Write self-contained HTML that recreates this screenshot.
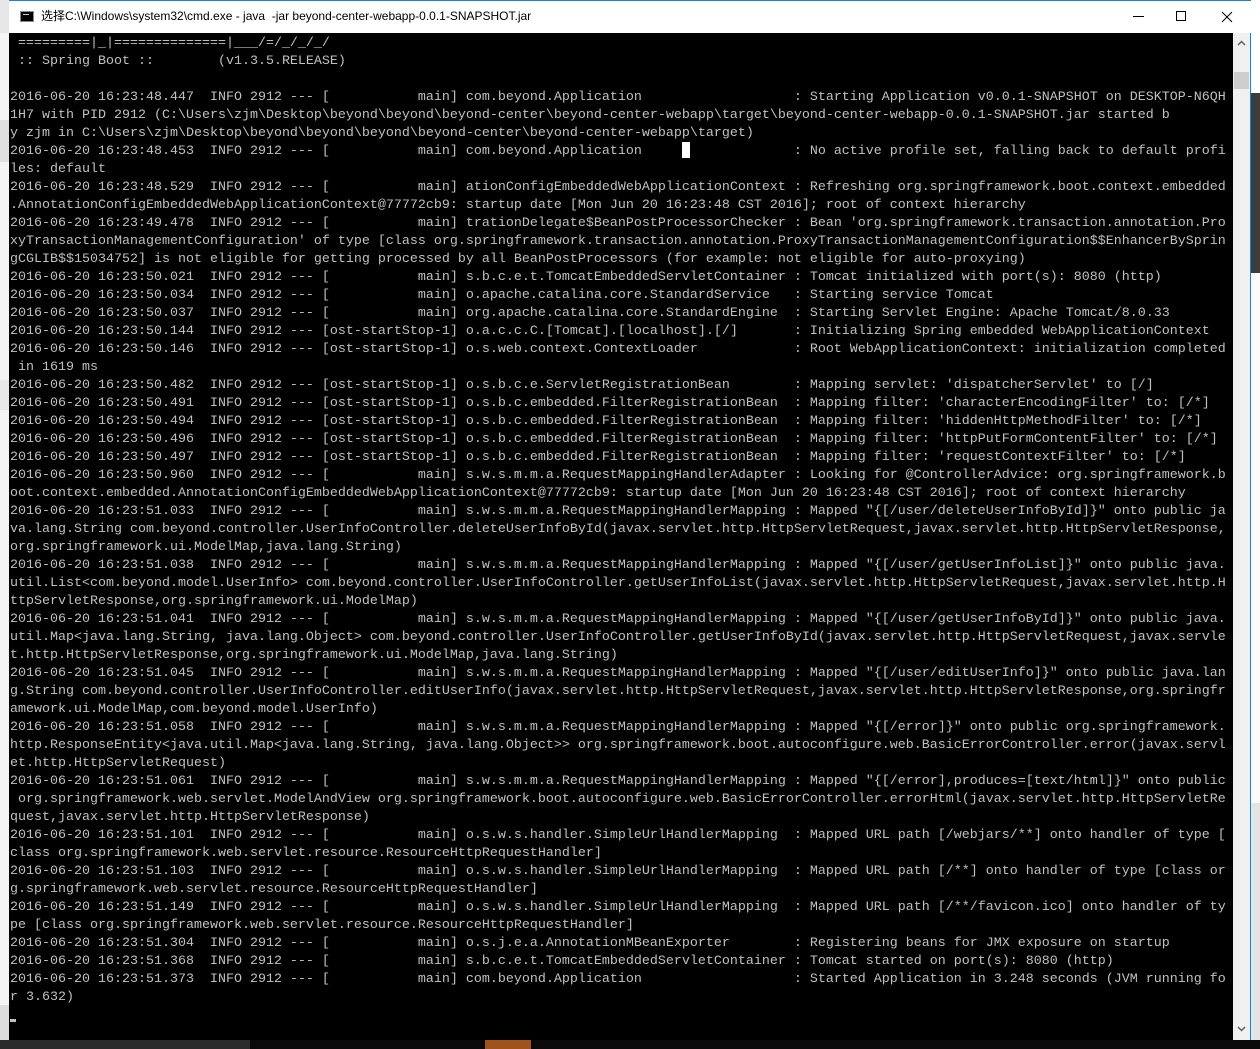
<!DOCTYPE html>
<html><head><meta charset="utf-8"><style>
*{margin:0;padding:0;box-sizing:border-box}
html,body{width:1260px;height:1049px;overflow:hidden;background:#fff;position:relative;font-family:"Liberation Sans","Noto Sans CJK SC",sans-serif}
.abs{position:absolute}
#title{left:9px;top:0;width:1242px;height:33px;background:#fff;border-top:1px solid #1883d7}
#term{left:9px;top:33px;width:1224px;height:1007px;background:#000}
pre{position:absolute;left:10px;top:35px;font-family:"Liberation Mono",monospace;font-size:13.333px;line-height:18px;color:#c0c0c0;white-space:pre}
#sb{left:1233px;top:33px;width:17px;height:1007px;background:#f0f0f0}
</style></head><body>
<div class="abs" style="left:0;top:0;width:9px;height:1040px;background:#f4f4f4"></div>
<div class="abs" style="left:0;top:0;width:9px;height:33px;background:#e6e6e6"></div>
<div class="abs" style="left:0;top:120px;width:9px;height:42px;background:#e0e0e0"></div>
<div class="abs" style="left:0;top:380px;width:9px;height:30px;background:#e8e8e8"></div>
<div class="abs" style="left:0;top:1005px;width:9px;height:35px;background:#dcdcdc"></div>
<div class="abs" style="left:1251px;top:0;width:9px;height:93px;background:#fff"></div>
<div class="abs" style="left:1251px;top:93px;width:9px;height:180px;background:#3c3c3c"></div>
<div class="abs" style="left:1251px;top:273px;width:9px;height:530px;background:#fafafa"></div>
<div class="abs" style="left:1251px;top:803px;width:9px;height:237px;background:#e4e4e4"></div>
<div class="abs" style="left:0;top:1040px;width:250px;height:9px;background:#2b2b2b"></div>
<div class="abs" style="left:250px;top:1040px;width:1010px;height:9px;background:#0a0a0a"></div>
<div class="abs" style="left:485px;top:1040px;width:46px;height:9px;background:#a0521d"></div>
<div class="abs" style="left:9px;top:0;width:1242px;height:1040px;border:1px solid #1883d7"></div>
<div id="title" class="abs">
 <div class="abs" style="left:11px;top:10px;width:14px;height:11px;background:#000;border:1px solid #888"><div style="position:absolute;left:2px;top:2px;width:6px;height:3px;border-top:1px solid #ccc"></div></div>
 <div class="abs" style="left:32px;top:7px;font-size:12px;color:#000;white-space:pre;line-height:16px">选择C:\Windows\system32\cmd.exe - java  -jar beyond-center-webapp-0.0.1-SNAPSHOT.jar</div>
 <div class="abs" style="left:1124px;top:15px;width:11px;height:1px;background:#000"></div>
 <div class="abs" style="left:1167px;top:10px;width:10px;height:10px;border:1px solid #000"></div>
 <svg class="abs" style="left:1212px;top:10px" width="12" height="12"><path d="M1 1L11 11M11 1L1 11" stroke="#000" stroke-width="1"/></svg>
</div>
<div id="term" class="abs"></div>
<div id="sb" class="abs">
 <svg class="abs" style="left:4px;top:7px" width="9" height="6"><path d="M1 5L4.5 1.5L8 5" stroke="#606060" stroke-width="1.5" fill="none"/></svg>
 <div class="abs" style="left:1px;top:39px;width:15px;height:17px;background:#cdcdcd"></div>
 <svg class="abs" style="left:4px;top:993px" width="9" height="6"><path d="M1 1L4.5 4.5L8 1" stroke="#606060" stroke-width="1.5" fill="none"/></svg>
</div>
<pre> =========|_|==============|___/=/_/_/_/
 :: Spring Boot ::        (v1.3.5.RELEASE)

2016-06-20 16:23:48.447  INFO 2912 --- [           main] com.beyond.Application                   : Starting Application v0.0.1-SNAPSHOT on DESKTOP-N6QH
1H7 with PID 2912 (C:\Users\zjm\Desktop\beyond\beyond\beyond-center\beyond-center-webapp\target\beyond-center-webapp-0.0.1-SNAPSHOT.jar started b
y zjm in C:\Users\zjm\Desktop\beyond\beyond\beyond\beyond-center\beyond-center-webapp\target)
2016-06-20 16:23:48.453  INFO 2912 --- [           main] com.beyond.Application                   : No active profile set, falling back to default profi
les: default
2016-06-20 16:23:48.529  INFO 2912 --- [           main] ationConfigEmbeddedWebApplicationContext : Refreshing org.springframework.boot.context.embedded
.AnnotationConfigEmbeddedWebApplicationContext@77772cb9: startup date [Mon Jun 20 16:23:48 CST 2016]; root of context hierarchy
2016-06-20 16:23:49.478  INFO 2912 --- [           main] trationDelegate$BeanPostProcessorChecker : Bean 'org.springframework.transaction.annotation.Pro
xyTransactionManagementConfiguration' of type [class org.springframework.transaction.annotation.ProxyTransactionManagementConfiguration$$EnhancerBySprin
gCGLIB$$15034752] is not eligible for getting processed by all BeanPostProcessors (for example: not eligible for auto-proxying)
2016-06-20 16:23:50.021  INFO 2912 --- [           main] s.b.c.e.t.TomcatEmbeddedServletContainer : Tomcat initialized with port(s): 8080 (http)
2016-06-20 16:23:50.034  INFO 2912 --- [           main] o.apache.catalina.core.StandardService   : Starting service Tomcat
2016-06-20 16:23:50.037  INFO 2912 --- [           main] org.apache.catalina.core.StandardEngine  : Starting Servlet Engine: Apache Tomcat/8.0.33
2016-06-20 16:23:50.144  INFO 2912 --- [ost-startStop-1] o.a.c.c.C.[Tomcat].[localhost].[/]       : Initializing Spring embedded WebApplicationContext
2016-06-20 16:23:50.146  INFO 2912 --- [ost-startStop-1] o.s.web.context.ContextLoader            : Root WebApplicationContext: initialization completed
 in 1619 ms
2016-06-20 16:23:50.482  INFO 2912 --- [ost-startStop-1] o.s.b.c.e.ServletRegistrationBean        : Mapping servlet: 'dispatcherServlet' to [/]
2016-06-20 16:23:50.491  INFO 2912 --- [ost-startStop-1] o.s.b.c.embedded.FilterRegistrationBean  : Mapping filter: 'characterEncodingFilter' to: [/*]
2016-06-20 16:23:50.494  INFO 2912 --- [ost-startStop-1] o.s.b.c.embedded.FilterRegistrationBean  : Mapping filter: 'hiddenHttpMethodFilter' to: [/*]
2016-06-20 16:23:50.496  INFO 2912 --- [ost-startStop-1] o.s.b.c.embedded.FilterRegistrationBean  : Mapping filter: 'httpPutFormContentFilter' to: [/*]
2016-06-20 16:23:50.497  INFO 2912 --- [ost-startStop-1] o.s.b.c.embedded.FilterRegistrationBean  : Mapping filter: 'requestContextFilter' to: [/*]
2016-06-20 16:23:50.960  INFO 2912 --- [           main] s.w.s.m.m.a.RequestMappingHandlerAdapter : Looking for @ControllerAdvice: org.springframework.b
oot.context.embedded.AnnotationConfigEmbeddedWebApplicationContext@77772cb9: startup date [Mon Jun 20 16:23:48 CST 2016]; root of context hierarchy
2016-06-20 16:23:51.033  INFO 2912 --- [           main] s.w.s.m.m.a.RequestMappingHandlerMapping : Mapped "{[/user/deleteUserInfoById]}" onto public ja
va.lang.String com.beyond.controller.UserInfoController.deleteUserInfoById(javax.servlet.http.HttpServletRequest,javax.servlet.http.HttpServletResponse,
org.springframework.ui.ModelMap,java.lang.String)
2016-06-20 16:23:51.038  INFO 2912 --- [           main] s.w.s.m.m.a.RequestMappingHandlerMapping : Mapped "{[/user/getUserInfoList]}" onto public java.
util.List&lt;com.beyond.model.UserInfo&gt; com.beyond.controller.UserInfoController.getUserInfoList(javax.servlet.http.HttpServletRequest,javax.servlet.http.H
ttpServletResponse,org.springframework.ui.ModelMap)
2016-06-20 16:23:51.041  INFO 2912 --- [           main] s.w.s.m.m.a.RequestMappingHandlerMapping : Mapped "{[/user/getUserInfoById]}" onto public java.
util.Map&lt;java.lang.String, java.lang.Object&gt; com.beyond.controller.UserInfoController.getUserInfoById(javax.servlet.http.HttpServletRequest,javax.servle
t.http.HttpServletResponse,org.springframework.ui.ModelMap,java.lang.String)
2016-06-20 16:23:51.045  INFO 2912 --- [           main] s.w.s.m.m.a.RequestMappingHandlerMapping : Mapped "{[/user/editUserInfo]}" onto public java.lan
g.String com.beyond.controller.UserInfoController.editUserInfo(javax.servlet.http.HttpServletRequest,javax.servlet.http.HttpServletResponse,org.springfr
amework.ui.ModelMap,com.beyond.model.UserInfo)
2016-06-20 16:23:51.058  INFO 2912 --- [           main] s.w.s.m.m.a.RequestMappingHandlerMapping : Mapped "{[/error]}" onto public org.springframework.
http.ResponseEntity&lt;java.util.Map&lt;java.lang.String, java.lang.Object&gt;&gt; org.springframework.boot.autoconfigure.web.BasicErrorController.error(javax.servl
et.http.HttpServletRequest)
2016-06-20 16:23:51.061  INFO 2912 --- [           main] s.w.s.m.m.a.RequestMappingHandlerMapping : Mapped "{[/error],produces=[text/html]}" onto public
 org.springframework.web.servlet.ModelAndView org.springframework.boot.autoconfigure.web.BasicErrorController.errorHtml(javax.servlet.http.HttpServletRe
quest,javax.servlet.http.HttpServletResponse)
2016-06-20 16:23:51.101  INFO 2912 --- [           main] o.s.w.s.handler.SimpleUrlHandlerMapping  : Mapped URL path [/webjars/**] onto handler of type [
class org.springframework.web.servlet.resource.ResourceHttpRequestHandler]
2016-06-20 16:23:51.103  INFO 2912 --- [           main] o.s.w.s.handler.SimpleUrlHandlerMapping  : Mapped URL path [/**] onto handler of type [class or
g.springframework.web.servlet.resource.ResourceHttpRequestHandler]
2016-06-20 16:23:51.149  INFO 2912 --- [           main] o.s.w.s.handler.SimpleUrlHandlerMapping  : Mapped URL path [/**/favicon.ico] onto handler of ty
pe [class org.springframework.web.servlet.resource.ResourceHttpRequestHandler]
2016-06-20 16:23:51.304  INFO 2912 --- [           main] o.s.j.e.a.AnnotationMBeanExporter        : Registering beans for JMX exposure on startup
2016-06-20 16:23:51.368  INFO 2912 --- [           main] s.b.c.e.t.TomcatEmbeddedServletContainer : Tomcat started on port(s): 8080 (http)
2016-06-20 16:23:51.373  INFO 2912 --- [           main] com.beyond.Application                   : Started Application in 3.248 seconds (JVM running fo
r 3.632)</pre>
<div class="abs" style="left:682px;top:142px;width:8px;height:16px;background:#fff"></div>
<div class="abs" style="left:10px;top:1019px;width:6px;height:3px;background:#c0c0c0"></div>
</body></html>
